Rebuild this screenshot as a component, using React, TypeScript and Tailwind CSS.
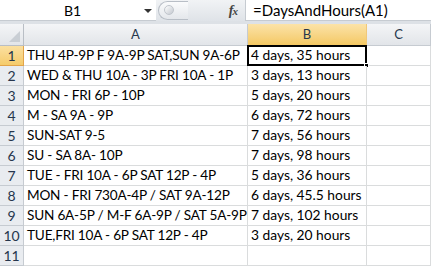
const rows: [string, string][] = [
  ["THU 4P-9P F 9A-9P SAT,SUN 9A-6P", "4 days, 35 hours"],
  ["WED & THU 10A - 3P FRI 10A - 1P", "3 days, 13 hours"],
  ["MON - FRI 6P - 10P", "5 days, 20 hours"],
  ["M - SA 9A - 9P", "6 days, 72 hours"],
  ["SUN-SAT 9-5", "7 days, 56 hours"],
  ["SU - SA 8A- 10P", "7 days, 98 hours"],
  ["TUE - FRI 10A - 6P SAT 12P - 4P", "5 days, 36 hours"],
  ["MON - FRI 730A-4P / SAT 9A-12P", "6 days, 45.5 hours"],
  ["SUN 6A-5P / M-F 6A-9P / SAT 5A-9P", "7 days, 102 hours"],
  ["TUE,FRI 10A - 6P SAT 12P - 4P", "3 days, 20 hours"],
  ["", ""],
];

function FormulaBar() {
  return (
    <div className="flex h-[21px] bg-[#dde1e6]">
      <div className="relative flex w-[156px] items-center bg-white border-b border-[#c6cbd1]">
        <span className="w-[145px] text-center text-[14px] text-black">B1</span>
        <span className="absolute left-[144px] top-[9px] h-0 w-0 border-x-[4px] border-t-[4px] border-x-transparent border-t-[#333]" />
      </div>
      <div className="relative flex w-[89px] items-center justify-end pr-[8px] bg-gradient-to-b from-[#f1f3f5] to-[#dfe3e8]">
        <div className="absolute left-[2px] top-[1px] h-[19px] w-[30px] rounded-l-full border border-[#b8bec6] border-r-0 bg-gradient-to-b from-[#fafbfc] to-[#e4e7eb]" />
        <div className="absolute left-[8px] top-[5px] h-[10px] w-[10px] rounded-full bg-gradient-to-br from-[#ffffff] to-[#c3c8cf] border border-[#c0c5cc]" />
        <span className="font-['Liberation_Serif',serif] italic font-bold text-[14px] text-[#444] tracking-[-1px]">
          f<span className="text-[11px]">x</span>
        </span>
      </div>
      <div className="flex flex-1 items-center bg-white border-l border-b border-[#c6cbd1] pl-[7px] text-[15px] text-black">
        =DaysAndHours(A1)
      </div>
    </div>
  );
}

export default function App() {
  return (
    <div className="w-[431px] h-[266px] overflow-hidden bg-white font-['Lato',sans-serif]">
      <FormulaBar />
      <div className="h-[3px] bg-[#dde1e6]" />
      <div className="grid grid-cols-[24px_224px_119px_64px]">
        {/* header row */}
        <div className="relative h-[22px] border-r border-b border-[#b9bec5] bg-gradient-to-b from-[#f4f5f7] to-[#e2e5e9]">
          <span className="absolute right-[3px] bottom-[3px] h-0 w-0 border-l-[11px] border-l-transparent [border-bottom:11px_solid_#c9ced4]" />
        </div>
        <div className="flex h-[22px] items-center justify-center border-r border-b border-[#c6cbd1] bg-gradient-to-b from-[#f4f5f7] to-[#e2e5e9] text-[13px] text-[#26364d]">
          A
        </div>
        <div className="flex h-[22px] items-center justify-center border-r border-b border-[#e2a44a] border-r-[#f0c87a] bg-gradient-to-b from-[#fbe3a8] to-[#f4c862] text-[13px] text-[#26364d]">
          B
        </div>
        <div className="flex h-[22px] items-center justify-center border-r border-b border-[#c6cbd1] bg-gradient-to-b from-[#f4f5f7] to-[#e2e5e9] text-[13px] text-[#26364d]">
          C
        </div>

        {rows.map(([a, b], i) => {
          const sel = i === 0;
          return [
            <div
              key={`n${i}`}
              className={
                sel
                  ? "flex h-[20px] items-center justify-center border-r border-b border-[#e2a44a] bg-gradient-to-b from-[#fbe0a0] to-[#f5cb6a] text-[14px] text-[#26364d]"
                  : "flex h-[20px] items-center justify-center border-r border-b border-[#c6cbd1] bg-[#e9ecf0] text-[14px] text-[#26364d]"
              }
            >
              {i + 1}
            </div>,
            <div
              key={`a${i}`}
              className="flex h-[20px] items-center whitespace-nowrap overflow-hidden border-r border-b border-[#dadcdd] pl-[3px] text-[13.6px] tracking-[-0.2px] text-black"
            >
              {a}
            </div>,
            <div
              key={`b${i}`}
              className="relative flex h-[20px] items-center whitespace-nowrap border-r border-b border-[#dadcdd] bg-white pl-[3px] text-[13.8px] text-black"
            >
              {b}
              {sel && (
                <>
                  <span className="absolute -left-[1px] -top-[1px] -right-[1px] -bottom-[1px] border-2 border-black" />
                  <span className="absolute -right-[3px] -bottom-[3px] h-[5px] w-[5px] bg-black border border-white" />
                </>
              )}
            </div>,
            <div key={`c${i}`} className="h-[20px] border-r border-b border-[#dadcdd]" />,
          ];
        })}
      </div>
    </div>
  );
}
